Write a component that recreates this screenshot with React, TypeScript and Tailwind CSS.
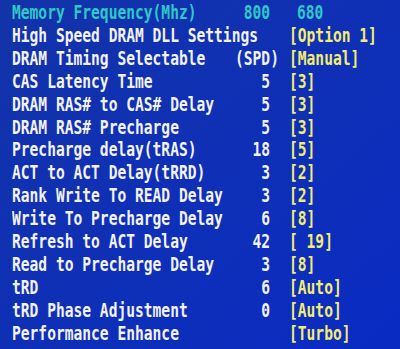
import React from "react";

type Row = {
  label: string;
  num?: string;
  value?: string;
  wide?: boolean;
};

const rows: Row[] = [
  { label: "High Speed DRAM DLL Settings", value: "[Option 1]" },
  { label: "DRAM Timing Selectable", num: "(SPD)", value: "[Manual]", wide: true },
  { label: "CAS Latency Time", num: "5", value: "[3]" },
  { label: "DRAM RAS# to CAS# Delay", num: "5", value: "[3]" },
  { label: "DRAM RAS# Precharge", num: "5", value: "[3]" },
  { label: "Precharge delay(tRAS)", num: "18", value: "[5]" },
  { label: "ACT to ACT Delay(tRRD)", num: "3", value: "[2]" },
  { label: "Rank Write To READ Delay", num: "3", value: "[2]" },
  { label: "Write To Precharge Delay", num: "6", value: "[8]" },
  { label: "Refresh to ACT Delay", num: "42", value: "[ 19]" },
  { label: "Read to Precharge Delay", num: "3", value: "[8]" },
  { label: "tRD", num: "6", value: "[Auto]" },
  { label: "tRD Phase Adjustment", num: "0", value: "[Auto]" },
  { label: "Performance Enhance", value: "[Turbo]" },
];

const Line: React.FC<{ children: React.ReactNode }> = ({ children }) => (
  <div className="flex h-[22.9px] items-center whitespace-pre">
    <div className="flex w-full scale-y-[1.27] items-center">{children}</div>
  </div>
);

export default function App() {
  return (
    <div
      className="h-[349px] w-[400px] overflow-hidden bg-linear-to-br from-[#1333a8] to-[#0a2bc3] pt-[2px] pl-[12px] text-[14.6px] font-bold leading-none text-[#f2f2f4]"
      style={{ fontFamily: '"DejaVu Sans Mono", "Liberation Mono", monospace' }}
    >
      <Line>
        <span className="w-[223px] text-[#2ec8c8]">Memory Frequency(Mhz)</span>
        <span className="w-[35px] text-right text-[#2ec8c8]">800</span>
        <span className="ml-[27px] text-[#2ec8c8]">680</span>
      </Line>
      {rows.map((r) => (
        <Line key={r.label}>
          <span className="w-[223px]">{r.label}</span>
          {r.wide ? (
            <span className="w-[43px] text-right">{r.num}</span>
          ) : (
            <span className="w-[35px] text-right">{r.num ?? ""}</span>
          )}
          <span
            className={
              r.wide ? "ml-[11px] text-[#f2ec72]" : "ml-[19px] text-[#f2ec72]"
            }
          >
            {r.value}
          </span>
        </Line>
      ))}
    </div>
  );
}
